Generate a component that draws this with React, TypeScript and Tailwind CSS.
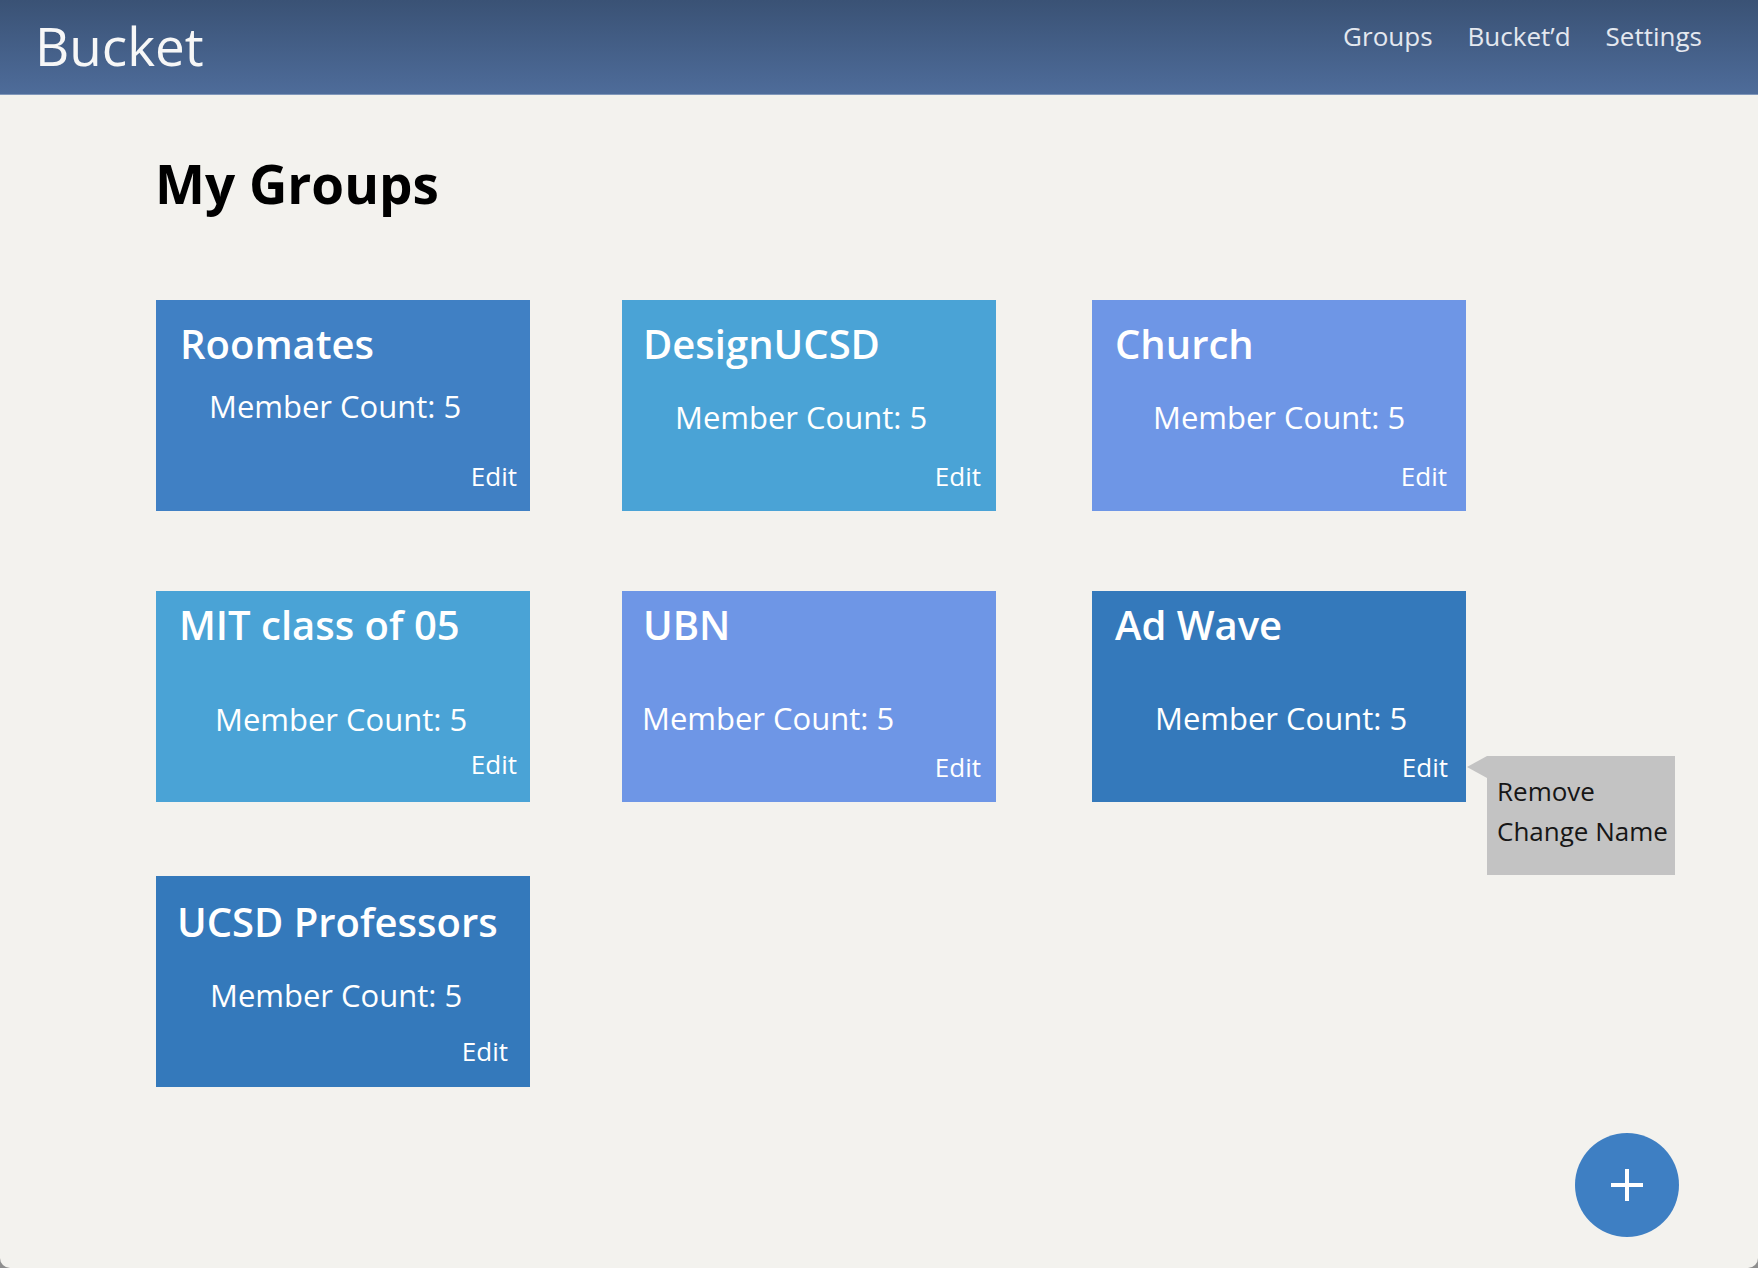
import React from 'react';

interface Group {
  name: string;
  color: string;
  card: string;
  title: string;
  member: string;
  edit: string;
  tooltip?: boolean;
}

const rows: Group[][] = [
  [
    { name: 'Roomates', color: 'bg-[#4080c4]', card: 'pt-[20px] pb-[19px]', title: 'ml-[24px]', member: 'ml-[53px] mt-[18px]', edit: 'mr-[13px]' },
    { name: 'DesignUCSD', color: 'bg-[#4aa3d6]', card: 'pt-[20px] pb-[19px]', title: 'ml-[21px]', member: 'ml-[53px] mt-[29px]', edit: 'mr-[15px]' },
    { name: 'Church', color: 'bg-[#6e96e6]', card: 'pt-[20px] pb-[19px]', title: 'ml-[23px]', member: 'ml-[61px] mt-[29px]', edit: 'mr-[19px]' },
  ],
  [
    { name: 'MIT class of 05', color: 'bg-[#4aa3d6]', card: 'pt-[10px] pb-[22px]', title: 'ml-[23px]', member: 'ml-[59px] mt-[50px]', edit: 'mr-[13px]' },
    { name: 'UBN', color: 'bg-[#6e96e6]', card: 'pt-[10px] pb-[19px]', title: 'ml-[21px]', member: 'ml-[20px] mt-[49px]', edit: 'mr-[15px]' },
    { name: 'Ad Wave', color: 'bg-[#3479bb]', card: 'pt-[10px] pb-[19px]', title: 'ml-[23px]', member: 'ml-[63px] mt-[49px]', edit: 'mr-[18px]', tooltip: true },
  ],
  [
    { name: 'UCSD Professors', color: 'bg-[#3479bb]', card: 'pt-[22px] pb-[20px]', title: 'ml-[21px]', member: 'ml-[54px] mt-[29px]', edit: 'mr-[22px]' },
  ],
];

const rowGap = ['mt-[81px]', 'mt-[80px]', 'mt-[74px]'];
const colGap = ['', 'ml-[92px]', 'ml-[96px]'];

const EditMenu: React.FC = () => (
  <div className="absolute left-[calc(100%+21px)] top-[165px] w-[188px] h-[119px] bg-[#c3c3c3] pt-[15px] pl-[10px] text-[26px] leading-[40px] text-[#161616]">
    <div className="absolute left-[-20px] top-0 w-0 h-0 border-y-[11px] border-y-transparent border-r-[20px] border-r-[#c3c3c3]" />
    <div>Remove</div>
    <div>Change Name</div>
  </div>
);

const GroupCard: React.FC<{ group: Group; className: string }> = ({ group, className }) => (
  <div className={`relative w-[374px] h-[211px] flex flex-col text-white ${group.color} ${group.card} ${className}`}>
    <h2 className={`text-[40px] leading-[48px] font-semibold whitespace-nowrap ${group.title}`}>{group.name}</h2>
    <p className={`text-[31px] leading-[40px] whitespace-nowrap ${group.member}`}>Member Count: 5</p>
    <span className={`mt-auto self-end text-[26px] leading-[32px] ${group.edit}`}>Edit</span>
    {group.tooltip && <EditMenu />}
  </div>
);

export default function App() {
  return (
    <div className="w-[1758px] h-[1268px] bg-[#8e8e8e] font-['Open_Sans',sans-serif]">
      <div className="relative w-full h-full bg-[#f3f2ee] rounded-b-[10px] overflow-hidden">
        <header className="h-[95px] flex items-start justify-between pl-[35px] pr-[56px] bg-gradient-to-b from-[#3a5275] to-[#4e6c9a] border-b border-[#8097ba]">
          <div className="mt-[10px] text-[53px] leading-[72px] text-[#f7f7f7]">Bucket</div>
          <nav className="mt-[19px] flex gap-[35px] text-[26px] leading-[35px] text-[#e4e8ef]">
            <span>Groups</span>
            <span>Bucket’d</span>
            <span>Settings</span>
          </nav>
        </header>

        <main className="pl-[156px]">
          <h1 className="mt-[53px] -ml-[1px] text-[53px] leading-[71px] font-bold text-black">My Groups</h1>
          {rows.map((row, i) => (
            <div key={i} className={`flex ${rowGap[i]}`}>
              {row.map((g, j) => (
                <GroupCard key={g.name} group={g} className={colGap[j]} />
              ))}
            </div>
          ))}
        </main>

        <button className="absolute right-[79px] bottom-[31px] w-[104px] h-[104px] rounded-full bg-[#3e7fc3] flex items-center justify-center">
          <svg width="32" height="32" viewBox="0 0 32 32">
            <rect x="0" y="14" width="32" height="4" fill="white" />
            <rect x="14" y="0" width="4" height="32" fill="white" />
          </svg>
        </button>
      </div>
    </div>
  );
}
